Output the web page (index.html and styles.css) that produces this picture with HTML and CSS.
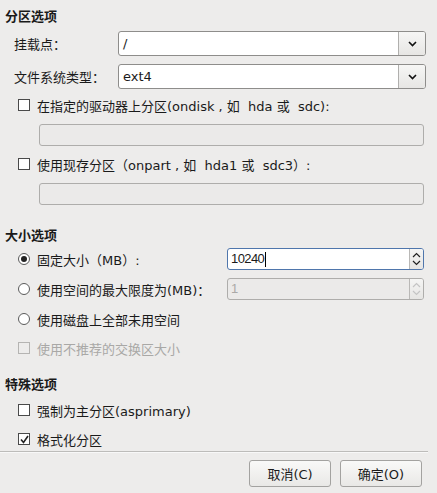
FILE: index.html
```html
<!DOCTYPE html>
<html>
<head>
<meta charset="utf-8">
<link rel="stylesheet" href="styles.css">
</head>
<body>
<div class="dialog">
  <div class="heading h1">分区选项</div>
  <div class="frow r1">
    <span class="flabel">挂载点：</span>
    <div class="combo"><span class="ctext">/</span><span class="cbtn"><svg width="9" height="6" viewBox="0 0 9 6"><path d="M1 1 L4.5 4.5 L8 1" fill="none" stroke="#111" stroke-width="1.6"/></svg></span></div>
  </div>
  <div class="frow r2">
    <span class="flabel">文件系统类型：</span>
    <div class="combo"><span class="ctext">ext4</span><span class="cbtn"><svg width="9" height="6" viewBox="0 0 9 6"><path d="M1 1 L4.5 4.5 L8 1" fill="none" stroke="#111" stroke-width="1.6"/></svg></span></div>
  </div>
  <div class="crow c1"><span class="check"></span><span>在指定的驱动器上分区(ondisk , 如&nbsp; hda 或&nbsp; sdc):</span></div>
  <div class="dentry e1"></div>
  <div class="crow c2"><span class="check"></span><span>使用现存分区（onpart , 如&nbsp; hda1 或&nbsp; sdc3）:</span></div>
  <div class="dentry e2"></div>

  <div class="heading h2">大小选项</div>
  <div class="srow s1">
    <div class="rlabel"><span class="radio on"></span><span>固定大小（MB）:</span></div>
    <div class="spin focus"><span class="stext">10240<span class="caret"></span></span><span class="sbtn"><svg width="9" height="14" viewBox="0 0 9 14"><path d="M1 5 L4.5 1.5 L8 5 M1 9 L4.5 12.5 L8 9" fill="none" stroke="#222" stroke-width="1.2"/></svg></span></div>
  </div>
  <div class="srow s2">
    <div class="rlabel"><span class="radio"></span><span>使用空间的最大限度为(MB)：</span></div>
    <div class="spin dis"><span class="stext">1</span><span class="sbtn"><svg width="9" height="14" viewBox="0 0 9 14"><path d="M1 5 L4.5 1.5 L8 5 M1 9 L4.5 12.5 L8 9" fill="none" stroke="#c4c4c4" stroke-width="1.2"/></svg></span></div>
  </div>
  <div class="crow s3"><span class="radio"></span><span>使用磁盘上全部未用空间</span></div>
  <div class="crow s4 disabled"><span class="check dcheck"></span><span>使用不推荐的交换区大小</span></div>

  <div class="heading h3">特殊选项</div>
  <div class="crow x1"><span class="check"></span><span>强制为主分区(asprimary)</span></div>
  <div class="crow x2"><span class="check checked"><svg width="9" height="9" viewBox="0 0 9 9"><path d="M1 4.5 L3.5 7.5 L8 1" fill="none" stroke="#222" stroke-width="1.6"/></svg></span><span>格式化分区</span></div>

  <div class="sep"></div>
  <div class="buttons">
    <button class="btn">取消(C)</button>
    <button class="btn">确定(O)</button>
  </div>
</div>
</body>
</html>
```
FILE: styles.css
```css
html, body {
  margin: 0;
  padding: 0;
  background: #edeceb;
}
body {
  width: 437px;
  height: 493px;
  overflow: hidden;
  font-family: "DejaVu Sans", "Noto Sans CJK SC", sans-serif;
  font-size: 13px;
  color: #1a1a1a;
}
.dialog {
  display: flex;
  flex-direction: column;
  padding: 7px 0 0 0;
}
.heading {
  font-weight: bold;
  height: 20px;
  line-height: 20px;
  padding-left: 5px;
  font-size: 13px;
}
.frow {
  display: flex;
  align-items: center;
  height: 25px;
  padding-left: 14px;
}
.r1 { margin-top: 4px; }
.r2 { margin-top: 8px; }
.flabel {
  width: 104px;
}
.combo {
  display: flex;
  width: 306px;
  height: 23px;
  border: 1px solid #8e8d8b;
  border-radius: 3px;
  background: #fff;
  overflow: hidden;
}
.ctext {
  flex: 1;
  line-height: 23px;
  padding-left: 4px;
  font-size: 13px;
}
.cbtn {
  width: 26px;
  border-left: 1px solid #b0afad;
  background: linear-gradient(#f6f6f5, #e7e6e4);
  display: flex;
  align-items: center;
  justify-content: center;
}
.crow {
  display: flex;
  align-items: center;
  height: 20px;
  padding-left: 18px;
  gap: 7px;
}
.check {
  width: 10px;
  height: 10px;
  border: 1px solid #4a4a4a;
  background: #fff;
  display: flex;
  align-items: center;
  justify-content: center;
  flex: none;
}
.dcheck {
  border-color: #b5b4b2;
  background: #edeceb;
}
.disabled { color: #a9a8a6; }
.radio {
  width: 10px;
  height: 10px;
  border: 1px solid #5a5a5a;
  border-radius: 50%;
  background: #fff;
  position: relative;
  flex: none;
}
.radio.on::after {
  content: "";
  position: absolute;
  left: 2px;
  top: 2px;
  width: 6px;
  height: 6px;
  border-radius: 50%;
  background: #222;
}
.c1 { margin-top: 6px; }
.dentry {
  margin-left: 39px;
  width: 383px;
  height: 20px;
  border: 1px solid #aeadab;
  border-radius: 3px;
  background: #ebeae9;
}
.e1 { margin-top: 9px; }
.c2 { margin-top: 8px; }
.e2 { margin-top: 9px; }
.h2 { margin-top: 21px; }
.srow {
  display: flex;
  align-items: center;
  height: 22px;
  padding-left: 18px;
}
.s1 { margin-top: 2px; }
.s2 { margin-top: 8px; }
.rlabel {
  display: flex;
  align-items: center;
  gap: 7px;
  width: 209px;
}
.spin {
  display: flex;
  width: 195px;
  height: 20px;
  border: 1px solid #aeadab;
  border-radius: 3px;
  overflow: hidden;
}
.spin.focus {
  border-color: #4f76ac;
  background: #fff;
}
.spin.dis {
  background: #ebeae9;
  color: #aaa9a7;
}
.stext {
  flex: 1;
  padding-left: 3px;
  line-height: 20px;
  font-family: "Liberation Sans Narrow", "Liberation Sans", sans-serif;
  font-size: 13px;
  letter-spacing: -0.6px;
  display: flex;
  align-items: center;
}
.caret {
  display: inline-block;
  width: 1px;
  height: 15px;
  background: #000;
  margin-left: 1px;
}
.sbtn {
  width: 13px;
  border-left: 1px solid #b9b8b6;
  background: linear-gradient(#f5f5f4, #e6e5e3);
  display: flex;
  align-items: center;
  justify-content: center;
}
.s3 { margin-top: 9px; height: 20px; }
.s4 { margin-top: 9px; }
.h3 { margin-top: 17px; }
.x1 { margin-top: 5px; }
.x2 { margin-top: 9px; }
.sep {
  margin-top: 2px;
  width: 428px;
  height: 1px;
  background: #bdbcba;
  border-bottom: 1px solid #f8f8f8;
}
.buttons {
  display: flex;
  justify-content: flex-end;
  gap: 9px;
  padding-right: 15px;
  margin-top: 7px;
}
.btn {
  width: 82px;
  height: 27px;
  border: 1px solid #a3a2a0;
  border-radius: 3px;
  background: linear-gradient(#f9f9f8, #e9e8e6);
  font-family: "DejaVu Sans", "Noto Sans CJK SC", sans-serif;
  font-size: 13px;
  color: #1a1a1a;
  padding: 0;
}
```
